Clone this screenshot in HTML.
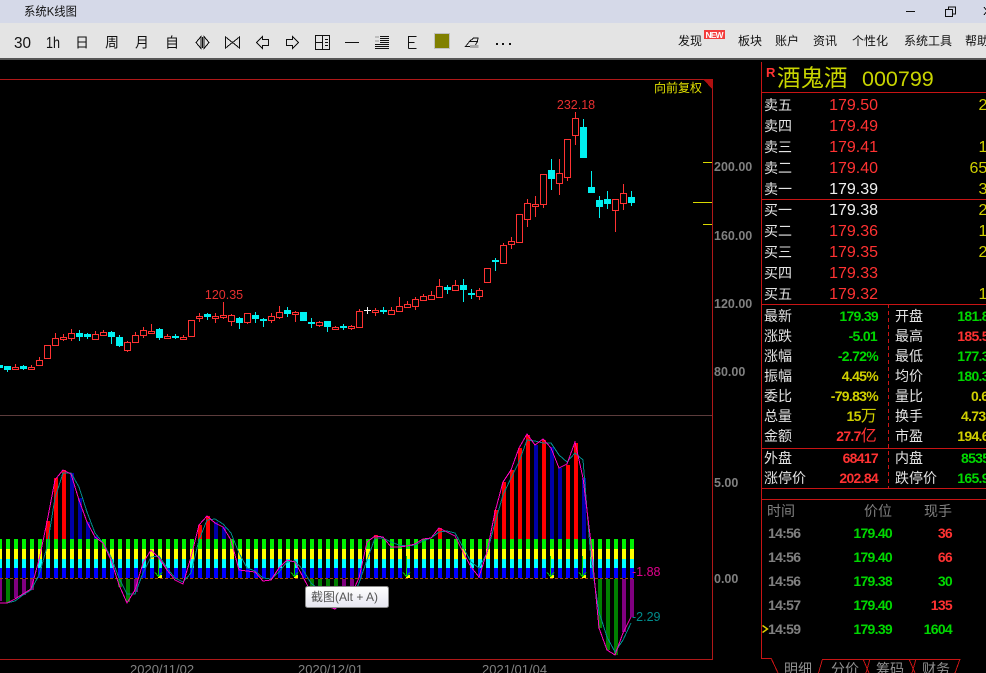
<!DOCTYPE html>
<html lang="zh"><head><meta charset="utf-8"><title>酒鬼酒 000799</title>
<style>
html,body{margin:0;padding:0;background:#000;overflow:hidden}
svg{display:block}
text{font-family:"Liberation Sans","Noto Sans CJK SC",sans-serif}
.c{font-family:"Liberation Sans","Noto Sans CJK SC",sans-serif;font-size:14px;fill:#e4e4e4}
.m{font-size:12px;fill:#111}
.n{font-size:16px}
.b{font-size:14px;font-weight:bold;letter-spacing:-.7px}
.ax{font-size:12.5px;fill:#808080;font-weight:bold}
.d{font-size:13px;fill:#808080}
.t{font-size:14px;font-weight:bold;letter-spacing:-.7px}
.r{fill:#ff3232}.g{fill:#00d800}.y{fill:#d0d000}.w{fill:#f0f0f0}
</style></head><body>
<svg xmlns="http://www.w3.org/2000/svg" width="986" height="673" viewBox="0 0 986 673">
<rect width="986" height="673" fill="#000"/>
<!-- title + toolbar -->
<rect width="986" height="23" fill="#d5d9e8"/>
<rect y="23" width="986" height="35" fill="#e4e4e4"/>
<rect y="58" width="986" height="2" fill="#555"/>
<text x="24" y="15.500" class="m" textLength="53" lengthAdjust="spacingAndGlyphs">系统K线图</text>
<g shape-rendering="crispEdges" fill="none" stroke="#111">
<path d="M906 11.500h9M945.500 9.500h7v7h-7zM948.500 9.500v-2.500h7v7h-3M984 7l3 4M984 15l3-4"/>
<path d="M196 42.500l5-6v12zM209 42.500l-5-6v12zM202.500 37v11M225.500 37l7 5.500-7 5.500zM239.500 37l-7 5.500 7 5.500z"/>
<path d="M262.500 36.500l-6 6 6 6v-3h6v-6h-6zM292.500 36.500l6 6-6 6v-3h-6v-6h6z"/>
<path d="M315.500 35.500h14v14h-14zM322.500 35.500v14M315.500 42.500h7M325 39.500h3M325 42.500h3M325 45.500h3"/>
<path d="M345 42.500h14M408.500 36v12.500M408.500 36.500h8M408.500 42.500h6M408.500 48.500h8"/>
<path d="M380 36.500h9M380 38.500h9M380 40.500h9M380 42.500h9M375 44.500h14M375 46.500h14M375 48.500h14"/>
<path d="M375 37h4M375 41h4" stroke="#999"/>
<path d="M465.500 46.500l4-5h8l-3 5zM469.500 41.500l4-3.500h4.500l-.5 3.500"/>
</g>
<rect x="470" y="45" width="8.500" height="3" fill="#aaa"/>
<rect x="434.500" y="33.500" width="15" height="15" fill="#808000" stroke="#c0c0c0"/>
<g fill="#111"><rect x="496" y="43" width="2" height="2"/><rect x="502" y="43" width="2" height="2"/><rect x="509" y="43" width="2" height="2"/></g>
<text x="14" y="48" font-size="16" fill="#111" textLength="17" lengthAdjust="spacingAndGlyphs">30</text>
<text x="46" y="48" font-size="16" fill="#111" textLength="14" lengthAdjust="spacingAndGlyphs">1h</text>
<g font-size="14" fill="#111"><text x="75" y="47.500">日</text><text x="105" y="47.500">周</text><text x="135" y="47.500">月</text><text x="165" y="47.500">自</text></g>
<g class="m"><text x="678" y="45" class="m">发现</text><text x="738" y="45" class="m">板块</text><text x="775" y="45" class="m">账户</text><text x="813" y="45" class="m">资讯</text><text x="852" y="45" class="m">个性化</text><text x="904" y="45" class="m">系统工具</text><text x="965" y="45" class="m">帮助</text></g>
<rect x="704" y="30" width="21" height="9" fill="#f33c3c"/>
<text x="714.500" y="38" font-size="8.500" font-weight="bold" fill="#fff" text-anchor="middle" textLength="18">NEW</text>

<!-- chart frame -->
<g shape-rendering="crispEdges" fill="none">
<path d="M0 79.500H712.500V659.500H0" stroke="#b01818"/>
<path d="M0 415.500H712" stroke="#5c3c3c"/>
<path d="M703 79H713V90z" fill="#b01010"/>
<path d="M703 162.500h9M693 202.500h19M703 224.500h9" stroke="#d8d800"/>
</g>
<text x="654" y="92" font-size="12" fill="#e0e000">向前复权</text>
<!-- candles -->
<g shape-rendering="crispEdges" fill="none" stroke="#ff3232">
<path d="M15.500 364V370M31.500 365V369M39.500 357V366M55.500 333V346M63.500 334V341M71.500 329V341M95.500 331V340M103.500 330V336M127.500 341V352M135.500 332V343M143.500 327V338M151.500 324V334M167.500 334V339M183.500 335V340M199.500 313V322M215.500 313V323M223.500 302V319M231.500 314V326M247.500 313V324M271.500 313V323M279.500 306V319M295.500 311V322M319.500 321V327M335.500 326V330M351.500 325V330M359.500 309V328M375.500 308V316M391.500 307V315M399.500 297V312M407.500 301V308M415.500 297V310M423.500 294V301M431.500 291V300M439.500 279V298M455.500 280V291M479.500 288V300M503.500 243V264M511.500 237V249M519.500 214V243M527.500 199V227M535.500 196V217M543.500 174V208M559.500 159V195M567.500 139V181M575.500 112V145M615.500 199V232M623.500 184V210"/>
<path fill="#000" d="M12.500 367.500h6V369.500h-6zM28.500 367.500h6V369.500h-6zM36.500 360.500h6V365.500h-6zM44.500 345.500h6V358.500h-6zM52.500 338.500h6V345.500h-6zM60.500 337.500h6V339.500h-6zM68.500 333.500h6V338.500h-6zM92.500 334.500h6V339.500h-6zM100.500 332.500h6V335.500h-6zM124.500 342.500h6V350.500h-6zM132.500 335.500h6V342.500h-6zM140.500 330.500h6V335.500h-6zM148.500 331.500h6V333.500h-6zM164.500 336.500h6V338.500h-6zM180.500 337.500h6V339.500h-6zM188.500 320.500h6V336.500h-6zM196.500 316.500h6V318.500h-6zM212.500 316.500h6V318.500h-6zM220.500 315.500h6V317.500h-6zM228.500 315.500h6V321.500h-6zM244.500 313.500h6V322.500h-6zM268.500 316.500h6V320.500h-6zM276.500 312.500h6V317.500h-6zM292.500 312.500h6V314.500h-6zM316.500 322.500h6V325.500h-6zM332.500 327.500h6V329.500h-6zM348.500 326.500h6V328.500h-6zM356.500 311.500h6V327.500h-6zM372.500 310.500h6V312.500h-6zM388.500 310.500h6V314.500h-6zM396.500 306.500h6V311.500h-6zM404.500 304.500h6V307.500h-6zM412.500 299.500h6V306.500h-6zM420.500 296.500h6V300.500h-6zM428.500 295.500h6V299.500h-6zM436.500 286.500h6V297.500h-6zM452.500 285.500h6V290.500h-6zM476.500 290.500h6V296.500h-6zM484.500 268.500h6V282.500h-6zM500.500 245.500h6V263.500h-6zM508.500 241.500h6V244.500h-6zM516.500 214.500h6V242.500h-6zM524.500 203.500h6V219.500h-6zM532.500 204.500h6V206.500h-6zM540.500 174.500h6V204.500h-6zM556.500 173.500h6V183.500h-6zM564.500 139.500h6V177.500h-6zM572.500 118.500h6V135.500h-6zM612.500 199.500h6V210.500h-6zM620.500 193.500h6V203.500h-6z"/>
<path stroke="#00f0f0" d="M7.500 366V372M23.500 365V370M79.500 330V341M87.500 333V339M111.500 331V344M119.500 335V347M159.500 328V340M175.500 334V339M207.500 313V320M239.500 317V329M255.500 312V323M263.500 318V327M287.500 307V317M311.500 318V328M327.500 321V332M343.500 324V330M383.500 307V314M447.500 285V294M463.500 279V302M471.500 289V299M495.500 258V271M551.500 159V190M583.500 119V158M591.500 171V193M599.500 196V218M607.500 191V209M631.500 191V206"/>
<path stroke="none" fill="#00f0f0" d="M-4 365h7v3h-7zM4 366h7v4h-7zM20 366h7v3h-7zM76 333h7v4h-7zM84 334h7v3h-7zM108 332h7v5h-7zM116 337h7v9h-7zM156 329h7v9h-7zM172 336h7v2h-7zM204 314h7v3h-7zM236 318h7v5h-7zM252 315h7v4h-7zM260 319h7v2h-7zM284 310h7v4h-7zM300 312h7v9h-7zM308 322h7v2h-7zM324 321h7v6h-7zM340 326h7v2h-7zM380 310h7v2h-7zM444 287h7v3h-7zM460 285h7v5h-7zM468 293h7v2h-7zM492 260h7v2h-7zM548 170h7v9h-7zM580 127h7v31h-7zM588 187h7v6h-7zM596 200h7v7h-7zM604 199h7v5h-7zM628 197h7v6h-7z"/>
<path stroke="#f4f4f4" d="M367.500 307V314M364 310.500h7"/>
</g>
<!-- labels -->
<text x="576" y="109" font-size="12.500" fill="#e83030" text-anchor="middle">232.18</text>
<text x="224" y="299" font-size="12.500" fill="#e83030" text-anchor="middle">120.35</text>
<g class="ax"><text x="714" y="171" class="ax">200.00</text><text x="714" y="240" class="ax">160.00</text><text x="714" y="308" class="ax">120.00</text><text x="714" y="376" class="ax">80.00</text><text x="714" y="487" class="ax">5.00</text><text x="714" y="583" class="ax">0.00</text></g>
<!-- MACD bars -->
<g shape-rendering="crispEdges">
<path fill="#ff0000" d="M46 521h4v18h-4zM54 478h4v61h-4zM62 470h4v69h-4zM198 525h4v14h-4zM206 516h4v23h-4zM374 535h4v4h-4zM438 528h4v11h-4zM494 510h4v29h-4zM502 482h4v57h-4zM510 470h4v69h-4zM518 448h4v91h-4zM526 435h4v104h-4zM542 440h4v99h-4zM566 465h4v74h-4zM574 443h4v96h-4z"/>
<path fill="#0000a8" d="M70 473h4v66h-4zM78 498h4v41h-4zM86 522h4v17h-4zM94 536h4v3h-4zM214 522h4v17h-4zM222 527h4v12h-4zM534 445h4v94h-4zM550 447h4v92h-4zM558 468h4v71h-4zM582 478h4v61h-4z"/>
</g>
<svg x="0" y="539" width="636" height="39" viewBox="0 0 636 39" shape-rendering="crispEdges">
<defs><pattern id="sp" patternUnits="userSpaceOnUse" x="6" y="0" width="8" height="39">
<rect width="4" height="10" y="0" fill="#00f000"/><rect width="4" height="10" y="10" fill="#ffff00"/><rect width="4" height="9" y="20" fill="#00ffff"/><rect width="4" height="10" y="29" fill="#0000ff"/></pattern></defs>
<rect width="636" height="39" fill="url(#sp)"/>
</svg>
<g shape-rendering="crispEdges">
<path fill="#008000" d="M6 579h4v24h-4zM118 579h4v8h-4zM126 579h4v23h-4zM310 579h4v8h-4zM318 579h4v8h-4zM326 579h4v8h-4zM334 579h4v29h-4zM598 579h4v49h-4zM606 579h4v71h-4zM614 579h4v76h-4z"/>
<path fill="#800080" d="M-2 579h4v22h-4zM14 579h4v19h-4zM22 579h4v16h-4zM30 579h4v11h-4zM134 579h4v13h-4zM342 579h4v8h-4zM350 579h4v8h-4zM622 579h4v53h-4zM630 579h4v38h-4z"/>
<path stroke="#a04a00" stroke-dasharray="3 2" d="M0 578.500H634" fill="none"/>
<path fill="#ffff00" d="M158 575h4v3h-4zM294 575h4v3h-4zM406 575h4v3h-4zM550 575h4v3h-4zM582 575h4v3h-4z"/>
<path fill="none" stroke="#00d000" d="M158.500 556V577M155 572.500l3.500 4 3.500-4M294.500 560V577M291 572.500l3.500 4 3.500-4M406.500 556V577M403 572.500l3.500 4 3.500-4M550.500 556V577M547 572.500l3.500 4 3.500-4M582.500 556V577M579 572.500l3.500 4 3.500-4"/>
<polyline fill="none" stroke="#008c8c" points="-1,603 7,603 15,601 23,595 31,590 39,575 47,547 55,498 63,473 71,473 79,487 87,512 95,533 103,543 111,557 119,578 127,594 135,594 143,573 151,557 159,556 167,568 175,578 183,582 191,573 199,540 207,520 215,519 223,524 231,533 239,553 247,568 255,571 263,578 271,579 279,572 287,562 295,561 303,570 311,583 319,590 327,600 335,608 343,607 351,600 359,583 367,560 375,538 383,538 391,542 399,545 407,546 415,545 423,541 431,538 439,532 447,531 455,533 463,547 471,562 479,568 487,553 495,523 503,495 511,478 519,462 527,440 535,441 543,443 551,443 559,455 567,462 575,453 583,460 591,560 599,612 607,637 615,652 623,640 631,623"/>
<polyline fill="none" stroke="#ff00c0" points="-1,603 7,603 15,599 23,594 31,589 39,560 47,522 55,480 63,470 71,474 79,500 87,522 95,537 103,543 111,560 119,585 127,603 135,590 143,563 151,550 159,558 167,570 175,580 183,584 191,557 199,525 207,516 215,523 223,527 231,540 239,570 247,571 255,572 263,581 271,580 279,568 287,560 295,562 303,577 311,592 319,600 327,606 335,609 343,602 351,595 359,578 367,542 375,536 383,537 391,547 399,547 407,546 415,544 423,539 431,538 439,528 447,532 455,536 463,552 471,567 479,577 487,552 495,512 503,482 511,470 519,448 527,434 535,445 543,439 551,448 559,468 567,464 575,442 583,478 591,543 599,628 607,650 615,655 623,633 631,617"/>
</g>
<text x="632" y="576" font-size="12.500" fill="#e0008c">-1.88</text>
<text x="632" y="621" font-size="12.500" fill="#008c8c">-2.29</text>
<!-- tooltip -->
<linearGradient id="tg" x1="0" y1="0" x2="0" y2="1"><stop offset="0" stop-color="#ffffff"/><stop offset="1" stop-color="#e6e6f0"/></linearGradient>
<rect x="305.500" y="586.500" width="83" height="21" rx="2" fill="url(#tg)" stroke="#8a8a8a"/>
<text x="311" y="601" font-size="12" fill="#555">截图(Alt + A)</text>
<!-- dates -->
<text x="130" y="674" class="d">2020/11/02</text><text x="298" y="674" class="d">2020/12/01</text><text x="482" y="674" class="d">2021/01/04</text>

<!-- right panel -->
<g shape-rendering="crispEdges" fill="none" stroke="#c81414">
<path d="M761.500 62V658.500H771M762 92.500H986M762 199.500H986M762 304.500H986M762 448.500H986M762 488.500H986M762 499.500H986"/>
<path d="M888.500 304V488" stroke-dasharray="4 3"/>
<path d="M822 659.500H960" />
</g>
<path d="M771 658L778 673M822.500 659L818.500 673M863 659L869 673M870 659L866 673M909 659L915 673M916 659L912 673M960 659L955 673" stroke="#c81414" fill="none" shape-rendering="crispEdges"/>
<text x="766" y="77" font-size="13" font-weight="bold" fill="#ff3232">R</text>
<text x="777" y="86" font-size="23.500" fill="#c8d400">酒鬼酒</text>
<text x="862" y="86" font-size="21.500" fill="#c8d400">000799</text>
<g><text class="c" x="764" y="110">卖五</text><text class="c" x="764" y="131">卖四</text><text class="c" x="764" y="152">卖三</text><text class="c" x="764" y="173">卖二</text><text class="c" x="764" y="194">卖一</text><text class="c" x="764" y="215">买一</text><text class="c" x="764" y="236">买二</text><text class="c" x="764" y="257">买三</text><text class="c" x="764" y="278">买四</text><text class="c" x="764" y="299">买五</text></g>
<g text-anchor="end"><text class="n r" x="878" y="110">179.50</text><text class="n r" x="878" y="131">179.49</text><text class="n r" x="878" y="152">179.41</text><text class="n r" x="878" y="173">179.40</text><text class="n w" x="878" y="194">179.39</text><text class="n w" x="878" y="215">179.38</text><text class="n r" x="878" y="236">179.36</text><text class="n r" x="878" y="257">179.35</text><text class="n r" x="878" y="278">179.33</text><text class="n r" x="878" y="299">179.32</text></g>
<g><text class="n y" x="978.500" y="110">2</text><text class="n y" x="978.500" y="152">1</text><text class="n y" x="969.500" y="173">65</text><text class="n y" x="978.500" y="194">3</text><text class="n y" x="978.500" y="215">2</text><text class="n y" x="978.500" y="236">1</text><text class="n y" x="978.500" y="257">2</text><text class="n y" x="978.500" y="299">1</text></g>
<g><text class="c" x="764" y="321">最新</text><text class="c" x="764" y="341">涨跌</text><text class="c" x="764" y="361">涨幅</text><text class="c" x="764" y="381">振幅</text><text class="c" x="764" y="401">委比</text><text class="c" x="764" y="421">总量</text><text class="c" x="764" y="441">金额</text><text class="c" x="764" y="463">外盘</text><text class="c" x="764" y="483">涨停价</text>
<text class="c" x="895" y="321">开盘</text><text class="c" x="895" y="341">最高</text><text class="c" x="895" y="361">最低</text><text class="c" x="895" y="381">均价</text><text class="c" x="895" y="401">量比</text><text class="c" x="895" y="421">换手</text><text class="c" x="895" y="441">市盈</text><text class="c" x="895" y="463">内盘</text><text class="c" x="895" y="483">跌停价</text></g>
<g text-anchor="end"><text class="b g" x="878" y="321">179.39</text><text class="b g" x="877" y="341">-5.01</text><text class="b g" x="878" y="361">-2.72%</text><text class="b y" x="878" y="381">4.45%</text><text class="b y" x="878" y="401">-79.83%</text><text class="b y" x="876" y="421">15<tspan font-size="16" font-weight="normal">万</tspan></text><text class="b r" x="876" y="441">27.7<tspan font-size="16" font-weight="normal">亿</tspan></text><text class="b r" x="878" y="463">68417</text><text class="b r" x="878" y="483">202.84</text></g>
<g><text class="b g" x="957.300" y="321">181.8</text><text class="b r" x="957.300" y="341">185.5</text><text class="b g" x="957.300" y="361">177.3</text><text class="b g" x="957.300" y="381">180.3</text><text class="b y" x="971" y="401">0.6</text><text class="b y" x="961" y="421">4.73</text><text class="b y" x="957.300" y="441">194.6</text><text class="b g" x="961" y="463">8535</text><text class="b g" x="957.300" y="483">165.9</text></g>
<g font-size="14" fill="#808080"><text x="767" y="516">时间</text><text x="864" y="516">价位</text><text x="924" y="516">现手</text></g>
<g class="t" fill="#808080"><text class="t" x="768" y="538">14:56</text><text class="t" x="768" y="562">14:56</text><text class="t" x="768" y="586">14:56</text><text class="t" x="768" y="610">14:57</text><text class="t" x="768" y="634">14:59</text></g>
<path d="M762.500 625.500l5 3.500-5 3.500" stroke="#e0d000" stroke-width="1.400" fill="none"/>
<g text-anchor="end"><text class="t g" x="892" y="538">179.40</text><text class="t g" x="892" y="562">179.40</text><text class="t g" x="892" y="586">179.38</text><text class="t g" x="892" y="610">179.40</text><text class="t g" x="892" y="634">179.39</text>
<text class="t r" x="952" y="538">36</text><text class="t r" x="952" y="562">66</text><text class="t g" x="952" y="586">30</text><text class="t r" x="952" y="610">135</text><text class="t g" x="952" y="634">1604</text></g>
<g font-size="14" fill="#909090"><text x="784" y="674">明细</text><text x="831" y="674">分价</text><text x="876" y="674">筹码</text><text x="922" y="674">财务</text></g>
</svg>
</body></html>
